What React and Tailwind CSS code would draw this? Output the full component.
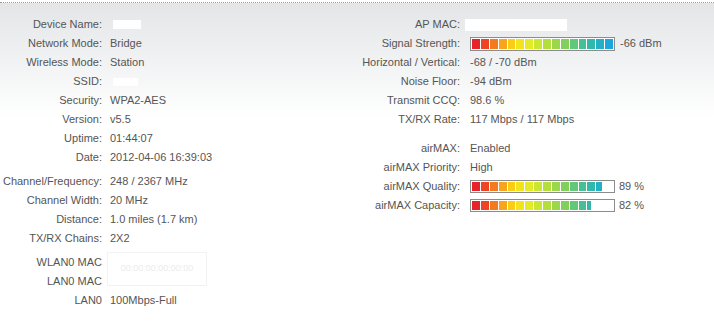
import React from "react";

const COLORS = [
  "#e6222b", "#ee4324", "#f47a20", "#f9a41c", "#fccc14", "#f4e21a",
  "#e3ea27", "#cbe631", "#b3df3c", "#9bd74a", "#82cf5a", "#62c779",
  "#45bf94", "#31b7ab", "#23afc4", "#1ba7dc",
];

function Bar({ pct, h }) {
  return (
    <div className="flex items-center gap-[5px]">
      <div className={`w-[145px] ${h} border border-[#8c8c8c] bg-white p-[1px]`}>
        <div className="h-full overflow-hidden" style={{ width: `${pct * 141}px` }}>
          <div className="w-[141px] h-full flex gap-[1px]">
            {COLORS.map((c, i) => (
              <div key={i} className="flex-1 h-full" style={{ backgroundColor: c }} />
            ))}
          </div>
        </div>
      </div>
    </div>
  );
}

function LRow({ label, children }) {
  return (
    <div className="flex h-[19px] items-center">
      <div className="w-[102px] shrink-0 text-right whitespace-nowrap">{label}</div>
      <div className="pl-[8px] whitespace-nowrap flex items-center">{children}</div>
    </div>
  );
}

function RRow({ label, children }) {
  return (
    <div className="flex h-[19px] items-center">
      <div className="w-[100px] shrink-0 text-right whitespace-nowrap">{label}</div>
      <div className="pl-[10px] whitespace-nowrap flex items-center">{children}</div>
    </div>
  );
}

export default function App() {
  return (
    <div className="w-[714px] h-[325px] overflow-hidden bg-white font-['Liberation_Sans',Arial,sans-serif] text-[11px] text-[#555]">
      <div className="h-[3px] border-b border-dotted border-[#9a9a9a]" />
      <div className="h-[322px] bg-[linear-gradient(to_bottom,#e3e5e7_0px,#ffffff_115px)] pt-[12px] grid grid-cols-[360px_1fr]">
        <div className="flex flex-col">
          <LRow label="Device Name:">
            <div className="ml-[3px] w-[28px] h-[9px] bg-white" />
          </LRow>
          <LRow label="Network Mode:">Bridge</LRow>
          <LRow label="Wireless Mode:">Station</LRow>
          <LRow label="SSID:">
            <div className="ml-[3px] w-[25px] h-[8px] bg-white" />
          </LRow>
          <LRow label="Security:">WPA2-AES</LRow>
          <LRow label="Version:">v5.5</LRow>
          <LRow label="Uptime:">01:44:07</LRow>
          <LRow label="Date:">2012-04-06 16:39:03</LRow>
          <div className="h-[5px]" />
          <LRow label="Channel/Frequency:">248 / 2367 MHz</LRow>
          <LRow label="Channel Width:">20 MHz</LRow>
          <LRow label="Distance:">1.0 miles (1.7 km)</LRow>
          <LRow label="TX/RX Chains:">2X2</LRow>
          <div className="relative">
            <div className="h-[5px]" />
            <LRow label="WLAN0 MAC" />
            <LRow label="LAN0 MAC" />
            <div className="absolute left-[107px] top-[4px] w-[100px] h-[34px] border border-[#f2f2f2] bg-white flex items-center justify-center text-[9px] text-[#ececec]">
              00:00:00:00:00:00
            </div>
          </div>
          <LRow label="LAN0">100Mbps-Full</LRow>
        </div>
        <div className="flex flex-col">
          <RRow label="AP MAC:">
            <div className="-ml-[5px] w-[102px] h-[12px] bg-white" />
          </RRow>
          <RRow label="Signal Strength:">
            <Bar pct={1} h="h-[14px]" />
            <span className="ml-[5px]">-66 dBm</span>
          </RRow>
          <RRow label="Horizontal / Vertical:">-68 / -70 dBm</RRow>
          <RRow label="Noise Floor:">-94 dBm</RRow>
          <RRow label="Transmit CCQ:">98.6 %</RRow>
          <RRow label="TX/RX Rate:">117 Mbps / 117 Mbps</RRow>
          <div className="h-[10px]" />
          <RRow label="airMAX:">Enabled</RRow>
          <RRow label="airMAX Priority:">High</RRow>
          <RRow label="airMAX Quality:">
            <Bar pct={0.92} h="h-[13px]" />
            <span className="ml-[4px]">89 %</span>
          </RRow>
          <RRow label="airMAX Capacity:">
            <Bar pct={0.845} h="h-[13px]" />
            <span className="ml-[4px]">82 %</span>
          </RRow>
        </div>
      </div>
    </div>
  );
}
